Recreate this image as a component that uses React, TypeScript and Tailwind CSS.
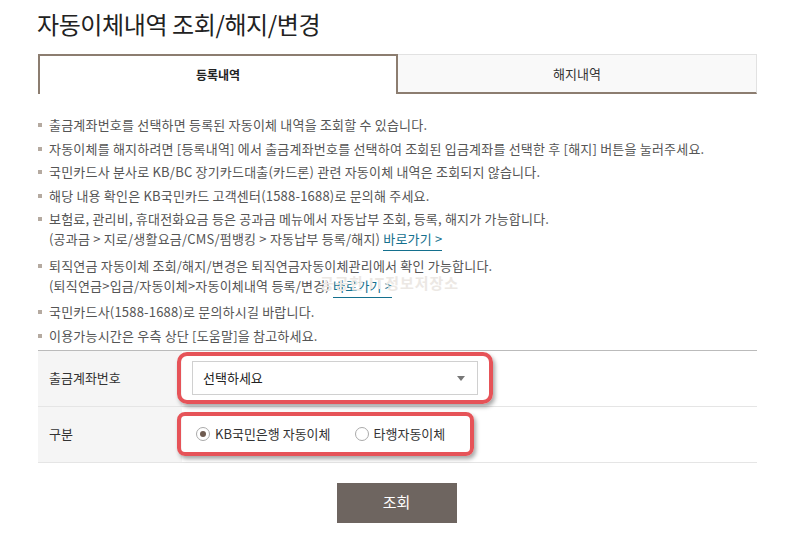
export default function App() {
  const items: { text: string; sub?: string }[] = [
    { text: "출금계좌번호를 선택하면 등록된 자동이체 내역을 조회할 수 있습니다." },
    { text: "자동이체를 해지하려면 [등록내역] 에서 출금계좌번호를 선택하여 조회된 입금계좌를 선택한 후 [해지] 버튼을 눌러주세요." },
    { text: "국민카드사 분사로 KB/BC 장기카드대출(카드론) 관련 자동이체 내역은 조회되지 않습니다." },
    { text: "해당 내용 확인은 KB국민카드 고객센터(1588-1688)로 문의해 주세요." },
    { text: "보험료, 관리비, 휴대전화요금 등은 공과금 메뉴에서 자동납부 조회, 등록, 해지가 가능합니다.", sub: "(공과금 > 지로/생활요금/CMS/펌뱅킹 > 자동납부 등록/해지)" },
    { text: "퇴직연금 자동이체 조회/해지/변경은 퇴직연금자동이체관리에서 확인 가능합니다.", sub: "(퇴직연금>입금/자동이체>자동이체내역 등록/변경)" },
    { text: "국민카드사(1588-1688)로 문의하시길 바랍니다." },
    { text: "이용가능시간은 우측 상단 [도움말]을 참고하세요." },
  ];

  return (
    <div
      className="w-[801px] h-[545px] bg-white relative overflow-hidden pl-[38px] pr-[44px] pt-[8px]"
      style={{ fontFamily: '"Noto Sans CJK KR", "Noto Sans", sans-serif' }}
    >
      <h1 className="text-[24px] leading-[32px] text-[#222] tracking-[-0.4px] -ml-[1px]">자동이체내역 조회/해지/변경</h1>

      {/* Tabs */}
      <div className="mt-[14px] flex h-[40px]">
        <div className="w-[360px] border-t-2 border-x-2 border-[#8c7d70] flex items-center justify-center text-[12px] font-bold text-[#222]">
          등록내역
        </div>
        <div className="flex-1 bg-[#f9f9f9] border-t border-r border-[#e2e2e2] border-b-2 border-b-[#8c7d70] flex items-center justify-center text-[13px] text-[#333]">
          해지내역
        </div>
      </div>

      {/* Notes */}
      <ul className="mt-[21px] text-[13px] leading-[20px] tracking-[0.2px] text-[#555] flex flex-col gap-[3.5px]">
        {items.map((it, i) => (
          <li key={i} className="flex">
            <span className="w-[4px] h-[4px] bg-[#b5aaa0] mt-[8px] mr-[7px] shrink-0" />
            <div className={it.sub ? "pb-[3px]" : ""}>
              <div>{it.text}</div>
              {it.sub && (
                <div>
                  {it.sub}{" "}
                  <span className="text-[#14708e] border-b border-[#14708e] pb-[2px]">바로가기 &gt;</span>
                </div>
              )}
            </div>
          </li>
        ))}
      </ul>

      {/* watermark */}
      <span className="absolute left-[320px] top-[272px] text-[15px] font-bold text-[#ece8e4] tracking-[1px] select-none pointer-events-none">
        공공한 IT정보저장소
      </span>

      {/* Form */}
      <div className="mt-[4px] border-t border-[#bbbbbb] text-[13px] text-[#333]">
        <div className="flex h-[56px] border-b border-[#e5e5e5]">
          <div className="w-[144px] bg-[#f5f5f5] flex items-center pl-[11px]">출금계좌번호</div>
          <div className="flex items-center -ml-[5px]">
            <div className="rounded-[10px] border-[4px] border-[#e65358] px-[11px] py-[5px] shadow-[2px_3px_4px_rgba(0,0,0,0.35)]">
              <div className="w-[286px] h-[34px] border border-[#d0d0d0] bg-white flex items-center justify-between pl-[10px] pr-[12px] text-[13px] text-[#222]">
                <span>선택하세요</span>
                <svg width="8" height="5" viewBox="0 0 8 5"><path d="M0 0h8L4 5z" fill="#777" /></svg>
              </div>
            </div>
          </div>
        </div>
        <div className="flex h-[56px] border-b border-[#e5e5e5]">
          <div className="w-[144px] bg-[#f5f5f5] flex items-center pl-[11px]">구분</div>
          <div className="flex items-center -ml-[5px]">
            <div className="rounded-[8px] border-[4px] border-[#e65358] h-[44px] w-[297px] flex items-center pl-[15px] gap-[24px] shadow-[2px_3px_4px_rgba(0,0,0,0.35)]">
              <label className="flex items-center gap-[5px]">
                <span className="w-[14px] h-[14px] rounded-full border border-[#aaa] flex items-center justify-center bg-white">
                  <span className="w-[6px] h-[6px] rounded-full bg-[#6e5b50]" />
                </span>
                <span>KB국민은행 자동이체</span>
              </label>
              <label className="flex items-center gap-[5px]">
                <span className="w-[14px] h-[14px] rounded-full border border-[#aaa] bg-white" />
                <span>타행자동이체</span>
              </label>
            </div>
          </div>
        </div>
      </div>

      <div className="flex justify-center mt-[20px] pr-[2px]">
        <button className="w-[120px] h-[40px] bg-[#6e6560] text-white text-[15px]">조회</button>
      </div>
    </div>
  );
}
